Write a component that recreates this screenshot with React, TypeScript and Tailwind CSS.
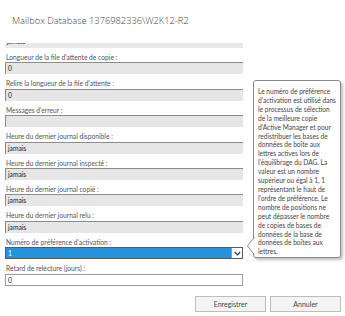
import React from "react";

const font = { fontFamily: 'Lato, "Open Sans", Arial, sans-serif' };
const titleFont = { fontFamily: '"Open Sans", "Noto Sans", Arial, sans-serif' };

function Label({ children }: { children: React.ReactNode }) {
  return (
    <div className="h-[14.4px] pt-[4px] pl-[1px] text-[6.7px] leading-[10px] text-[#555] whitespace-nowrap">
      {children}
    </div>
  );
}

function ReadField({ value }: { value?: string }) {
  return (
    <div className="h-[12px] bg-[#e6e6e6] border-t border-l border-[#8c8c8c] pl-[2px] text-[6.7px] leading-[11px] text-[#222]">
      {value ?? ""}
    </div>
  );
}

const tooltipLines = [
  "Le numéro de préférence",
  "d'activation est utilisé dans",
  "le processus de sélection",
  "de la meilleure copie",
  "d'Active Manager et pour",
  "redistribuer les bases de",
  "données de boîte aux",
  "lettres actives lors de",
  "l'équilibrage du DAG. La",
  "valeur est un nombre",
  "supérieur ou égal à 1, 1",
  "représentant le haut de",
  "l'ordre de préférence. Le",
  "nombre de positions ne",
  "peut dépasser le nombre",
  "de copies de bases de",
  "données de la base de",
  "données de boîtes aux",
  "lettres.",
];

export default function App() {
  return (
    <div className="relative w-[345px] h-[316px] bg-white overflow-hidden" style={font}>
      <div
        className="pl-[12px] pt-[14px] h-[43px] text-[9.3px] leading-[14px] font-light text-[#444] whitespace-nowrap"
        style={titleFont}
      >
        Mailbox Database 1376982336\W2K12-R2
      </div>
      <div className="ml-[5px] w-[238px] h-[246px] overflow-hidden flex flex-col">
        <div className="-mt-[7px] h-[12px] shrink-0 bg-[#e9e9e9] pl-[2px] text-[6.7px] leading-[11px] text-[#222]">
          jamais
        </div>
        <Label>Longueur de la file d'attente de copie :</Label>
        <ReadField value="0" />
        <Label>Relire la longueur de la file d'attente :</Label>
        <ReadField value="0" />
        <Label>Messages d'erreur :</Label>
        <ReadField />
        <Label>Heure du dernier journal disponible :</Label>
        <ReadField value="jamais" />
        <Label>Heure du dernier journal inspecté :</Label>
        <ReadField value="jamais" />
        <Label>Heure du dernier journal copié :</Label>
        <ReadField value="jamais" />
        <Label>Heure du dernier journal relu :</Label>
        <ReadField value="jamais" />
        <Label>Numéro de préférence d'activation :</Label>
        <div className="h-[12px] flex border border-[#5a5a5a]">
          <div className="flex-1 bg-[#2592dd] pl-[2px] text-[6.7px] leading-[10px] text-white">1</div>
          <div className="w-[11px] bg-white border-l border-[#9a9a9a] flex items-center justify-center">
            <svg width="7" height="5" viewBox="0 0 7 5">
              <path d="M0.8 1 L3.5 3.8 L6.2 1" fill="none" stroke="#333" strokeWidth="1.2" />
            </svg>
          </div>
        </div>
        <Label>Retard de relecture (jours) :</Label>
        <div className="h-[12px] bg-white border border-[#9a9a9a] pl-[2px] text-[6.7px] leading-[10px] text-[#222]">
          0
        </div>
      </div>
      <div className="flex justify-end gap-[4px] pr-[4px] pt-[7px]">
        <button className="w-[71px] h-[16px] bg-[#f4f4f4] border border-[#bdbdbd] text-[7px] text-[#444] leading-[14px]">
          Enregistrer
        </button>
        <button className="w-[71px] h-[16px] bg-[#f4f4f4] border border-[#bdbdbd] text-[7px] text-[#444] leading-[14px]">
          Annuler
        </button>
      </div>

      <div className="absolute left-[253px] top-[80px] w-[88px] h-[178px] bg-white border border-[#8a8a8a] rounded-[3px] shadow-[2px_2px_3px_rgba(0,0,0,0.25)] pl-[4px] pt-[6px]">
        {tooltipLines.map((l, i) => (
          <div key={i} className="text-[6.6px] leading-[8.9px] text-[#444] whitespace-nowrap">
            {l}
          </div>
        ))}
        <svg className="absolute left-[-7px] top-[156px]" width="8" height="18" viewBox="0 0 8 18">
          <path d="M7.5 0 L0.5 9 L7.5 18" fill="white" stroke="#8a8a8a" strokeWidth="1" />
        </svg>
      </div>
    </div>
  );
}
